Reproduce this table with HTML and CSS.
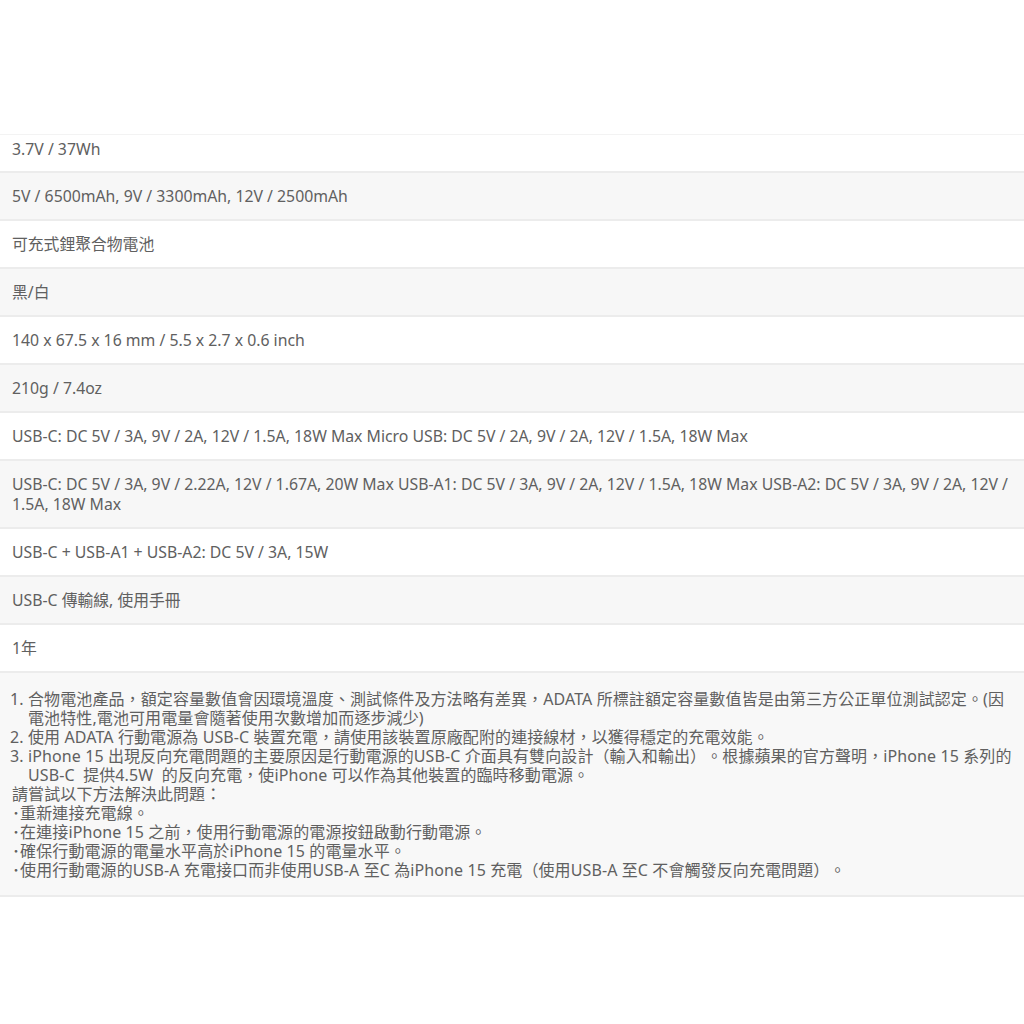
FILE: index.html
```html
<!DOCTYPE html>
<html lang="zh-Hant">
<head>
    <meta charset="UTF-8">
    <meta name="viewport" content="width=device-width, initial-scale=1.0">
    <title>規格</title>
    <link rel="stylesheet" href="styles.css">
</head>
<body>

    <div class="spec-table">
        <div class="spec-row first">3.7V / 37Wh</div>
        <div class="spec-row alt">5V / 6500mAh, 9V / 3300mAh, 12V / 2500mAh</div>
        <div class="spec-row">可充式鋰聚合物電池</div>
        <div class="spec-row alt">黑/白</div>
        <div class="spec-row">140 x 67.5 x 16 mm / 5.5 x 2.7 x 0.6 inch</div>
        <div class="spec-row alt">210g / 7.4oz</div>
        <div class="spec-row">USB-C: DC 5V / 3A, 9V / 2A, 12V / 1.5A, 18W Max Micro USB: DC 5V / 2A, 9V / 2A, 12V / 1.5A, 18W Max</div>
        <div class="spec-row alt">USB-C: DC 5V / 3A, 9V / 2.22A, 12V / 1.67A, 20W Max USB-A1: DC 5V / 3A, 9V / 2A, 12V / 1.5A, 18W Max USB-A2: DC 5V / 3A, 9V / 2A, 12V / 1.5A, 18W Max</div>
        <div class="spec-row">USB-C + USB-A1 + USB-A2: DC 5V / 3A, 15W</div>
        <div class="spec-row alt">USB-C 傳輸線, 使用手冊</div>
        <div class="spec-row">1年</div>

        <div class="notes">
            <ol>
                <li>合物電池產品，額定容量數值會因環境溫度、測試條件及方法略有差異，ADATA 所標註額定容量數值皆是由第三方公正單位測試認定。(因電池特性,電池可用電量會隨著使用次數增加而逐步減少)</li>
                <li>使用 ADATA 行動電源為 USB-C 裝置充電，請使用該裝置原廠配附的連接線材，以獲得穩定的充電效能。</li>
                <li>iPhone 15 出現反向充電問題的主要原因是行動電源的USB-C 介面具有雙向設計（輸入和輸出）。根據蘋果的官方聲明，iPhone 15 系列的 USB-C&nbsp; 提供4.5W&nbsp; 的反向充電，使iPhone 可以作為其他裝置的臨時移動電源。</li>
            </ol>
            <p>請嘗試以下方法解決此問題：</p>
            <p>･重新連接充電線。</p>
            <p>･在連接iPhone 15 之前，使用行動電源的電源按鈕啟動行動電源。</p>
            <p>･確保行動電源的電量水平高於iPhone 15 的電量水平。</p>
            <p>･使用行動電源的USB-A 充電接口而非使用USB-A 至C 為iPhone 15 充電（使用USB-A 至C 不會觸發反向充電問題）。</p>
        </div>
    </div>

</body>
</html>
```

FILE: styles.css
```css
:root {
    --text-color: #606060;
    --row-alt: #f7f7f7;
    --border-color: #ececec;
}

body {
    margin: 0;
    background: #ffffff;
    color: var(--text-color);
    font-family: 'Noto Sans', 'Noto Sans CJK TC', sans-serif;
    font-size: 16px;
}

.spec-table {
    margin-top: 134px;
    border-top: 1px solid #f3f3f3;
}

.spec-row {
    padding: 13px 4px 13px 12px;
    font-size: 15.8px;
    line-height: 20px;
    border-bottom: 2px solid var(--border-color);
}

.spec-row.first {
    padding-top: 4px;
    padding-bottom: 12px;
}

.spec-row.alt {
    background-color: var(--row-alt);
}

.notes {
    background-color: #f8f8f8;
    padding: 17px 4px 15px 10px;
    border-bottom: 2px solid var(--border-color);
    line-height: 19px;
    letter-spacing: 0.1px;
    text-spacing-trim: space-all;
}

.notes ol {
    margin: 0;
    padding-left: 18px;
}

.notes p {
    margin: 0 0 0 2px;
}
```
